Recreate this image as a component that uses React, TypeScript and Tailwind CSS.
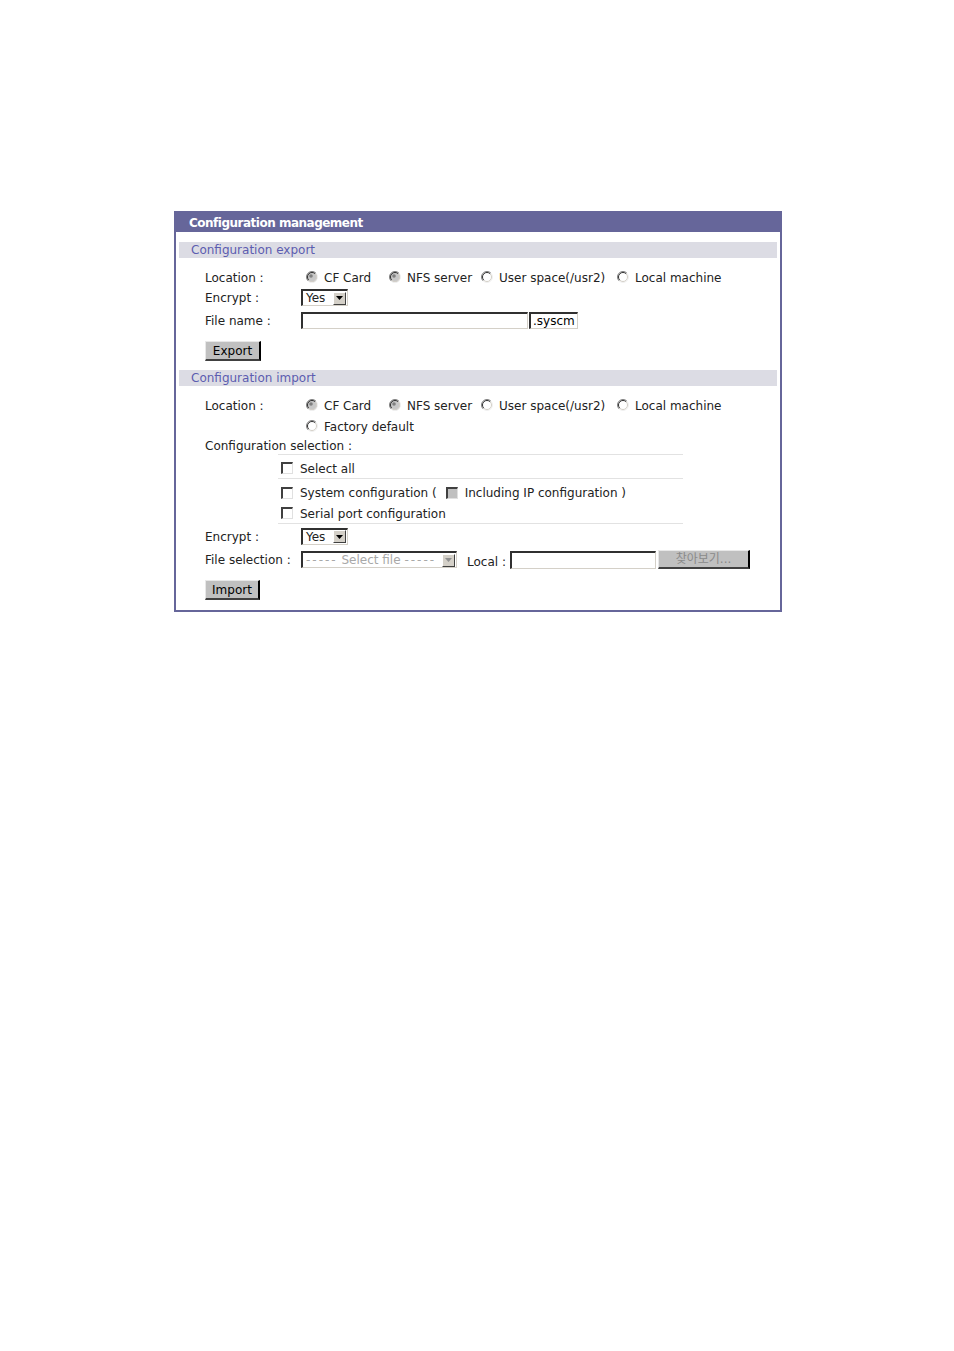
import React from "react";

const Radio = ({ disabled = false }: { disabled?: boolean }) => (
  <svg width="12" height="12" viewBox="0 0 12 12" className="shrink-0">
    <circle cx="6" cy="6" r="5.5" fill={disabled ? "#c8c8c8" : "#ffffff"} />
    <path d="M2.1 9.9 A5.5 5.5 0 0 1 9.9 2.1" fill="none" stroke="#808080" strokeWidth="1" />
    <path d="M2.8 9.2 A4.5 4.5 0 0 1 9.2 2.8" fill="none" stroke="#303030" strokeWidth="1" />
    <path d="M9.9 2.1 A5.5 5.5 0 0 1 2.1 9.9" fill="none" stroke="#f0f0f0" strokeWidth="1" />
    <path d="M9.2 2.8 A4.5 4.5 0 0 1 2.8 9.2" fill="none" stroke="#d4d0c8" strokeWidth="1" />
    {disabled && <circle cx="5" cy="5" r="1.8" fill="#808080" />}
  </svg>
);

const Check = ({ disabled = false }: { disabled?: boolean }) => (
  <span
    className={`inline-block h-[12px] w-[12px] shrink-0 border-l-2 border-t-2 border-l-[#404040] border-t-[#404040] border-r border-b border-r-[#e0e0e0] border-b-[#e0e0e0] ${
      disabled ? "bg-[#c0c0c0]" : "bg-white"
    }`}
  />
);

const Arrow = ({ disabled = false }: { disabled?: boolean }) => (
  <span className="ml-auto mr-[1px] flex h-[13px] w-[13px] items-center justify-center border-r border-b border-r-[#404040] border-b-[#404040] border-l border-t border-l-white border-t-white bg-[#d4d0c8]">
    <svg width="7" height="4" viewBox="0 0 7 4">
      <path d="M0 0 H7 L3.5 4 Z" fill={disabled ? "#909090" : "#000"} />
    </svg>
  </span>
);

const Option = ({ label, w, disabled }: { label: string; w: string; disabled?: boolean }) => (
  <div className={`flex items-center ${w}`}>
    <span className="ml-[5px] flex">
      <Radio disabled={disabled} />
    </span>
    <span className="ml-[6px] whitespace-nowrap pt-[1px]">{label}</span>
  </div>
);

const Label = ({ children }: { children: React.ReactNode }) => (
  <div className="w-[96px] shrink-0 whitespace-nowrap pt-[1px]">{children}</div>
);

const Btn = ({ children, w }: { children: React.ReactNode; w: string }) => (
  <div
    className={`flex h-[20px] ${w} items-center justify-center border-l border-t border-l-[#e8e8e8] border-t-[#e8e8e8] border-r-2 border-b-2 border-r-[#000] border-b-[#404040] bg-[#c0c0c0] text-black`}
  >
    {children}
  </div>
);

const SectionBar = ({ title }: { title: string }) => (
  <div className="flex h-[16px] items-center bg-[#dcdce4] pl-[12px] text-[#5c5cb0]">{title}</div>
);

export default function App() {
  return (
    <div className="min-h-[1351px] bg-white pt-[211px] font-['DejaVu_Sans',sans-serif] text-[12px] leading-none text-[#222]">
      <div className="ml-[174px] w-[608px] border-2 border-[#66669a] pb-[10px]">
        <div className="flex h-[19px] items-center bg-[#66669a] pl-[13px] text-[12px] font-bold tracking-[-0.5px] text-white">
          Configuration management
        </div>

        <div className="px-[3px]">
          <div className="mt-[10px]">
            <SectionBar title="Configuration export" />
          </div>

          <div className="pl-[26px]">
            <div className="mt-[9px] flex h-[20px] items-center">
              <Label>Location :</Label>
              <Option label="CF Card" w="w-[83px]" disabled />
              <Option label="NFS server" w="w-[92px]" disabled />
              <Option label="User space(/usr2)" w="w-[136px]" />
              <Option label="Local machine" w="w-[120px]" />
            </div>
            <div className="flex h-[21px] items-center">
              <Label>Encrypt :</Label>
              <div className="flex h-[17px] w-[47px] items-center border-l-2 border-t-2 border-l-[#303030] border-t-[#303030] border-r border-b border-r-[#d4d0c8] border-b-[#d4d0c8] bg-white pl-[3px]">
                <span>Yes</span>
                <Arrow />
              </div>
            </div>
            <div className="mt-[2px] flex h-[21px] items-center">
              <Label>File name :</Label>
              <div className="h-[17px] w-[227px] border-l-2 border-t-2 border-l-[#303030] border-t-[#303030] border-r border-b border-r-[#d4d0c8] border-b-[#d4d0c8] bg-white" />
              <div className="ml-[1px] flex h-[17px] w-[49px] items-center border-l-2 border-t-2 border-l-[#303030] border-t-[#303030] border-r border-b border-r-[#d4d0c8] border-b-[#d4d0c8] bg-white pl-[2px] text-black">
                .syscm
              </div>
            </div>
            <div className="mt-[10px] flex">
              <Btn w="w-[56px]">Export</Btn>
            </div>
          </div>

          <div className="mt-[9px]">
            <SectionBar title="Configuration import" />
          </div>

          <div className="pl-[26px]">
            <div className="mt-[9px] flex h-[20px] items-center">
              <Label>Location :</Label>
              <Option label="CF Card" w="w-[83px]" disabled />
              <Option label="NFS server" w="w-[92px]" disabled />
              <Option label="User space(/usr2)" w="w-[136px]" />
              <Option label="Local machine" w="w-[120px]" />
            </div>
            <div className="mt-[1px] flex h-[20px] items-center">
              <Label>&nbsp;</Label>
              <Option label="Factory default" w="w-[140px]" />
            </div>
            <div className="flex h-[18px] items-center pt-[1px]">Configuration selection :</div>

            <div className="ml-[73px] w-[405px] border-t border-[#e2e2e2]">
              <div className="flex h-[23px] items-center gap-[7px] pl-[3px] pt-[3px]">
                <Check />
                <span className="pt-[1px]">Select all</span>
              </div>
              <div className="border-t border-[#e2e2e2]">
                <div className="flex h-[24px] items-center pl-[3px] pt-[3px]">
                  <Check />
                  <span className="ml-[7px] whitespace-nowrap pt-[1px]">System configuration (</span>
                  <span className="ml-[9px] flex">
                    <Check disabled />
                  </span>
                  <span className="ml-[7px] whitespace-nowrap pt-[1px]">Including IP configuration )</span>
                </div>
                <div className="flex h-[20px] items-center gap-[7px] pl-[3px]">
                  <Check />
                  <span className="pt-[1px]">Serial port configuration</span>
                </div>
              </div>
              <div className="border-t border-[#e2e2e2]" />
            </div>

            <div className="flex h-[24px] items-center">
              <Label>Encrypt :</Label>
              <div className="flex h-[17px] w-[47px] items-center border-l-2 border-t-2 border-l-[#303030] border-t-[#303030] border-r border-b border-r-[#d4d0c8] border-b-[#d4d0c8] bg-white pl-[3px]">
                <span>Yes</span>
                <Arrow />
              </div>
            </div>
            <div className="flex h-[23px] items-center">
              <Label>File selection :</Label>
              <div className="flex h-[17px] w-[156px] items-center border-l-2 border-t-2 border-l-[#303030] border-t-[#303030] border-r border-b border-r-[#d4d0c8] border-b-[#d4d0c8] bg-white pl-[3px] text-[#a8a8a8]">
                <span className="whitespace-nowrap">
                  <span className="tracking-[2px]">-----</span> Select file <span className="tracking-[2px]">-----</span>
                </span>
                <Arrow disabled />
              </div>
              <span className="ml-[10px] mt-[4px] whitespace-nowrap">Local :</span>
              <div className="ml-[4px] h-[18px] w-[146px] border-l-2 border-t-2 border-l-[#303030] border-t-[#303030] border-r border-b border-r-[#d4d0c8] border-b-[#d4d0c8] bg-white" />
              <div className="ml-[2px] flex h-[19px] w-[92px] items-center justify-center border-l border-t border-l-[#e8e8e8] border-t-[#e8e8e8] border-r-2 border-b-2 border-r-[#000] border-b-[#404040] bg-[#c0c0c0] font-['DejaVu_Sans','Noto_Sans_CJK_KR',sans-serif] text-[#8a8a8a]">
                찾아보기...
              </div>
            </div>
            <div className="mt-[9px] flex">
              <Btn w="w-[55px]">Import</Btn>
            </div>
          </div>
        </div>
      </div>
    </div>
  );
}
